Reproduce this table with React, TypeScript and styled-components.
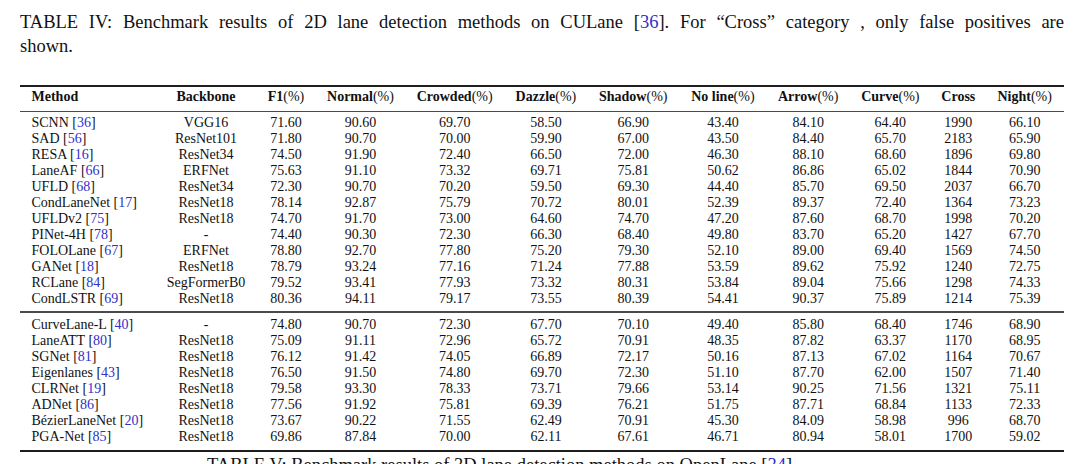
import React from "react";
import styled, { createGlobalStyle } from "styled-components";

const GlobalStyle = createGlobalStyle`
  html, body { margin: 0; padding: 0; background: #ffffff; }
  body { font-family: "Liberation Serif", "Times New Roman", serif; color: #111; }
`;

const Page = styled.div`
  width: 1080px;
  height: 464px;
  overflow: hidden;
  box-sizing: border-box;
  padding: 10px 16px 0 20px;
`;

const Caption = styled.div`
  font-size: 18.5px;
  line-height: 24px;
  color: #111;
`;

const CaptionLine = styled.div<{ $justify?: boolean; $indent?: number }>`
  white-space: nowrap;
  text-align: ${(p) => (p.$justify ? "justify" : "left")};
  text-align-last: ${(p) => (p.$justify ? "justify" : "left")};
  ${(p) => (p.$justify ? "white-space: normal;" : "")}
  padding-left: ${(p) => p.$indent ?? 0}px;
`;

const Ref = styled.span`
  color: #3030c8;
`;

const Table = styled.div`
  margin-top: 27px;
  width: 1044px;
  font-size: 14px;
  line-height: 16px;
`;

const Rule = styled.div<{ $thick?: boolean }>`
  height: ${(p) => (p.$thick ? 2 : 1.3)}px;
  background: ${(p) => (p.$thick ? "#1e1e1e" : "#4a4a4a")};
`;

const cols =
  "136.4px 99.2px 60.8px 88.2px 100.2px 82.4px 92.2px 87.2px 83.4px 80.8px 55.2px 77.6px";

const Row = styled.div<{ $header?: boolean }>`
  display: grid;
  grid-template-columns: ${cols};
  height: 16px;
  ${(p) => (p.$header ? "padding: 2px 0 6px 0;" : "")}
`;

const Cell = styled.div<{ $left?: boolean; $bold?: boolean }>`
  text-align: ${(p) => (p.$left ? "left" : "center")};
  padding-left: ${(p) => (p.$left ? "11.5px" : "0")};
  font-weight: ${(p) => (p.$bold ? 700 : 400)};
  white-space: nowrap;
`;

const Unit = styled.span`
  font-weight: 400;
`;

const Group = styled.div<{ $top: number; $bottom: number }>`
  padding-top: ${(p) => p.$top}px;
  padding-bottom: ${(p) => p.$bottom}px;
`;

const NextCaption = styled.div`
  margin-top: 1px;
  font-size: 18.5px;
  line-height: 24px;
  padding-left: 187px;
  white-space: nowrap;
`;

type RowData = [string, string, string, ...string[]];

const group1: RowData[] = [
  ["SCNN", "36", "VGG16", "71.60", "90.60", "69.70", "58.50", "66.90", "43.40", "84.10", "64.40", "1990", "66.10"],
  ["SAD", "56", "ResNet101", "71.80", "90.70", "70.00", "59.90", "67.00", "43.50", "84.40", "65.70", "2183", "65.90"],
  ["RESA", "16", "ResNet34", "74.50", "91.90", "72.40", "66.50", "72.00", "46.30", "88.10", "68.60", "1896", "69.80"],
  ["LaneAF", "66", "ERFNet", "75.63", "91.10", "73.32", "69.71", "75.81", "50.62", "86.86", "65.02", "1844", "70.90"],
  ["UFLD", "68", "ResNet34", "72.30", "90.70", "70.20", "59.50", "69.30", "44.40", "85.70", "69.50", "2037", "66.70"],
  ["CondLaneNet", "17", "ResNet18", "78.14", "92.87", "75.79", "70.72", "80.01", "52.39", "89.37", "72.40", "1364", "73.23"],
  ["UFLDv2", "75", "ResNet18", "74.70", "91.70", "73.00", "64.60", "74.70", "47.20", "87.60", "68.70", "1998", "70.20"],
  ["PINet-4H", "78", "-", "74.40", "90.30", "72.30", "66.30", "68.40", "49.80", "83.70", "65.20", "1427", "67.70"],
  ["FOLOLane", "67", "ERFNet", "78.80", "92.70", "77.80", "75.20", "79.30", "52.10", "89.00", "69.40", "1569", "74.50"],
  ["GANet", "18", "ResNet18", "78.79", "93.24", "77.16", "71.24", "77.88", "53.59", "89.62", "75.92", "1240", "72.75"],
  ["RCLane", "84", "SegFormerB0", "79.52", "93.41", "77.93", "73.32", "80.31", "53.84", "89.04", "75.66", "1298", "74.33"],
  ["CondLSTR", "69", "ResNet18", "80.36", "94.11", "79.17", "73.55", "80.39", "54.41", "90.37", "75.89", "1214", "75.39"],
];

const group2: RowData[] = [
  ["CurveLane-L", "40", "-", "74.80", "90.70", "72.30", "67.70", "70.10", "49.40", "85.80", "68.40", "1746", "68.90"],
  ["LaneATT", "80", "ResNet18", "75.09", "91.11", "72.96", "65.72", "70.91", "48.35", "87.82", "63.37", "1170", "68.95"],
  ["SGNet", "81", "ResNet18", "76.12", "91.42", "74.05", "66.89", "72.17", "50.16", "87.13", "67.02", "1164", "70.67"],
  ["Eigenlanes", "43", "ResNet18", "76.50", "91.50", "74.80", "69.70", "72.30", "51.10", "87.70", "62.00", "1507", "71.40"],
  ["CLRNet", "19", "ResNet18", "79.58", "93.30", "78.33", "73.71", "79.66", "53.14", "90.25", "71.56", "1321", "75.11"],
  ["ADNet", "86", "ResNet18", "77.56", "91.92", "75.81", "69.39", "76.21", "51.75", "87.71", "68.84", "1133", "72.33"],
  ["BézierLaneNet", "20", "ResNet18", "73.67", "90.22", "71.55", "62.49", "70.91", "45.30", "84.09", "58.98", "996", "68.70"],
  ["PGA-Net", "85", "ResNet18", "69.86", "87.84", "70.00", "62.11", "67.61", "46.71", "80.94", "58.01", "1700", "59.02"],
];

const headers: [string, boolean][] = [
  ["Backbone", false],
  ["F1", true],
  ["Normal", true],
  ["Crowded", true],
  ["Dazzle", true],
  ["Shadow", true],
  ["No line", true],
  ["Arrow", true],
  ["Curve", true],
  ["Cross", false],
  ["Night", true],
];

const DataRow: React.FC<{ d: RowData }> = ({ d }) => {
  const [name, ref, ...rest] = d;
  return (
    <Row>
      <Cell $left>
        {name} [<Ref>{ref}</Ref>]
      </Cell>
      {rest.map((v, i) => (
        <Cell key={i}>{v}</Cell>
      ))}
    </Row>
  );
};

export default function App() {
  return (
    <>
      <GlobalStyle />
      <Page>
        <Caption>
          <CaptionLine $justify>
            TABLE IV: Benchmark results of 2D lane detection methods on CULane [<Ref>36</Ref>]. For “Cross” category , only false positives are
          </CaptionLine>
          <CaptionLine>shown.</CaptionLine>
        </Caption>
        <Table>
          <Rule $thick />
          <Row $header>
            <Cell $left $bold>Method</Cell>
            {headers.map(([h, pct]) => (
              <Cell key={h} $bold>
                {h}
                {pct && <Unit>(%)</Unit>}
              </Cell>
            ))}
          </Row>
          <Rule />
          <Group $top={3} $bottom={4}>
            {group1.map((d) => (
              <DataRow key={d[0]} d={d} />
            ))}
          </Group>
          <Rule />
          <Group $top={4} $bottom={5}>
            {group2.map((d) => (
              <DataRow key={d[0]} d={d} />
            ))}
          </Group>
          <Rule $thick />
        </Table>
        <NextCaption>
          TABLE V: Benchmark results of 3D lane detection methods on OpenLane [<Ref>34</Ref>].
        </NextCaption>
      </Page>
    </>
  );
}
